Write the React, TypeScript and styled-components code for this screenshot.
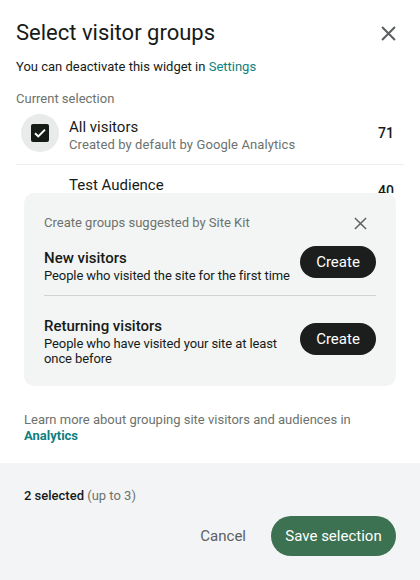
import styled, { createGlobalStyle } from 'styled-components';

const GlobalStyle = createGlobalStyle`
  html, body {
    margin: 0;
    padding: 0;
    background: #ffffff;
  }

  body {
    font-family: Roboto, "Noto Sans", "Liberation Sans", sans-serif;
    color: #202124;
    -webkit-font-smoothing: antialiased;
  }

  * {
    box-sizing: border-box;
  }
`;

const Dialog = styled.div`
  width: 420px;
  height: 580px;
  display: flex;
  flex-direction: column;
  background: #ffffff;
  overflow: hidden;
`;

const Header = styled.header`
  padding: 19px 16px 0 16px;
`;

const TitleRow = styled.div`
  display: flex;
  justify-content: space-between;
  align-items: center;
  padding-right: 7px;
`;

const Title = styled.h1`
  margin: 0;
  font-size: 22px;
  line-height: 28px;
  font-weight: 400;
  color: #161b18;
`;

const IconButton = styled.button<{ size: number }>`
  display: flex;
  align-items: center;
  justify-content: center;
  padding: 0;
  border: none;
  background: none;
  color: #5c5f62;
  width: ${({ size }) => size}px;
  height: ${({ size }) => size}px;
  cursor: pointer;
`;

const Subtitle = styled.p`
  margin: 12px 0 0 0;
  font-size: 13px;
  line-height: 16px;
  color: #161b18;

  a {
    color: #108080;
    text-decoration: none;
  }
`;

const SectionLabel = styled.p`
  margin: 16px 0 0 0;
  font-size: 13px;
  line-height: 16px;
  color: #6c726e;
`;

const List = styled.ul`
  list-style: none;
  margin: 0 16px;
  padding: 0;
  height: 86px;
  overflow: hidden;
`;

const Row = styled.li`
  display: flex;
  align-items: center;
  height: 58px;
  padding: 0 10px 6px 5px;
  border-bottom: 1px solid #ebeeec;
`;

const CheckHalo = styled.span<{ visible: boolean }>`
  flex: none;
  width: 38px;
  height: 38px;
  border-radius: 50%;
  display: flex;
  align-items: center;
  justify-content: center;
  margin-right: 10px;
  background: ${({ visible }) => (visible ? '#e8ebe9' : 'transparent')};
`;

const CheckBox = styled.span<{ checked: boolean }>`
  width: 18px;
  height: 18px;
  border-radius: 2px;
  display: flex;
  align-items: center;
  justify-content: center;
  background: ${({ checked }) => (checked ? '#161b18' : 'transparent')};
`;

const RowText = styled.div`
  flex: 1;
  display: flex;
  flex-direction: column;
  margin-top: 4px;
`;

const RowTitle = styled.span`
  font-size: 15px;
  line-height: 20px;
  color: #161b18;
`;

const RowSub = styled.span`
  font-size: 13px;
  line-height: 16px;
  color: #6c726e;
  letter-spacing: 0.1px;
`;

const Count = styled.span`
  font-size: 14px;
  font-weight: 500;
  color: #161b18;
`;

const Suggestions = styled.section`
  margin: 0 24px;
  padding: 22px 20px 20px 20px;
  background: #f3f5f4;
  border-radius: 10px;
`;

const SuggestionsHead = styled.div`
  display: flex;
  justify-content: space-between;
  align-items: center;
  padding-right: 8px;
`;

const SuggestionsLabel = styled.span`
  font-size: 13px;
  line-height: 16px;
  color: #6c726e;
`;

const Suggestion = styled.div<{ last?: boolean }>`
  display: flex;
  align-items: center;
  gap: 4px;
  padding: ${({ last }) => (last ? '20px 0 0 0' : '17px 0 12px 0')};
  border-bottom: ${({ last }) => (last ? 'none' : '1px solid #cfd3d1')};
`;

const SuggestionText = styled.div`
  flex: 1;
  display: flex;
  flex-direction: column;
`;

const SuggestionTitle = styled.span`
  font-size: 15px;
  line-height: 20px;
  font-weight: 500;
  color: #161b18;
`;

const SuggestionDesc = styled.span`
  font-size: 13px;
  line-height: 15px;
  color: #161b18;
  letter-spacing: -0.1px;
`;

const CreateButton = styled.button<{ lift: number }>`
  flex: none;
  width: 76px;
  height: 32px;
  margin-top: ${({ lift }) => -lift}px;
  border-radius: 16px;
  border: none;
  background: #1b1e1c;
  color: #ffffff;
  font-family: inherit;
  font-size: 15px;
  cursor: pointer;
`;

const LearnMore = styled.p`
  margin: 26px 24px 19px 24px;
  font-size: 13px;
  line-height: 16px;
  color: #6c726e;

  a {
    display: block;
    color: #0f7f7f;
    font-weight: 700;
    text-decoration: none;
  }
`;

const Footer = styled.footer`
  flex: 1;
  background: #f3f4f5;
  padding: 25px 24px 24px 24px;
  display: flex;
  flex-direction: column;
`;

const SelectedCount = styled.p`
  margin: 0;
  font-size: 13px;
  line-height: 16px;
  font-weight: 500;
  color: #161b18;

  span {
    font-weight: 400;
    color: #6c726e;
  }
`;

const Actions = styled.div`
  margin-top: 12px;
  display: flex;
  justify-content: flex-end;
  align-items: center;
  gap: 13px;
`;

const TextButton = styled.button`
  border: none;
  background: none;
  padding: 0 12px;
  height: 40px;
  font-family: inherit;
  font-size: 15px;
  color: #5c5f62;
  cursor: pointer;
`;

const PrimaryButton = styled.button`
  height: 40px;
  width: 125px;
  border-radius: 20px;
  border: none;
  background: #3c7251;
  color: #ffffff;
  font-family: inherit;
  font-size: 15px;
  cursor: pointer;
`;

const CloseIcon = ({ size, stroke }: { size: number; stroke: number }) => (
  <svg width={size} height={size} viewBox="0 0 14 14" fill="none">
    <path d="M1 1L13 13M13 1L1 13" stroke="currentColor" strokeWidth={stroke} />
  </svg>
);

const CheckMark = () => (
  <svg width="12" height="10" viewBox="0 0 12 10" fill="none">
    <path d="M1 5.2L4.3 8.4L11 1.6" stroke="#ffffff" strokeWidth="2" />
  </svg>
);

const audiences = [
  { title: 'All visitors', sub: 'Created by default by Google Analytics', count: '71', checked: true },
  { title: 'Test Audience', sub: 'Created by you', count: '40', checked: true },
];

const suggestions = [
  { title: 'New visitors', desc: 'People who visited the site for the first time', lift: 8 },
  { title: 'Returning visitors', desc: 'People who have visited your site at least once before', lift: 4 },
];

export default function App() {
  return (
    <>
      <GlobalStyle />
      <Dialog>
        <Header>
          <TitleRow>
            <Title>Select visitor groups</Title>
            <IconButton size={18}>
              <CloseIcon size={15} stroke={1.9} />
            </IconButton>
          </TitleRow>
          <Subtitle>
            You can deactivate this widget in <a href="#">Settings</a>
          </Subtitle>
          <SectionLabel>Current selection</SectionLabel>
        </Header>

        <List>
          {audiences.map((a, i) => (
            <Row key={a.title}>
              <CheckHalo visible={i === 0}>
                <CheckBox checked={i === 0}>{i === 0 && <CheckMark />}</CheckBox>
              </CheckHalo>
              <RowText>
                <RowTitle>{a.title}</RowTitle>
                <RowSub>{a.sub}</RowSub>
              </RowText>
              <Count>{a.count}</Count>
            </Row>
          ))}
        </List>

        <Suggestions>
          <SuggestionsHead>
            <SuggestionsLabel>Create groups suggested by Site Kit</SuggestionsLabel>
            <IconButton size={16}>
              <CloseIcon size={13} stroke={1.6} />
            </IconButton>
          </SuggestionsHead>
          {suggestions.map((s, i) => (
            <Suggestion key={s.title} last={i === suggestions.length - 1}>
              <SuggestionText>
                <SuggestionTitle>{s.title}</SuggestionTitle>
                <SuggestionDesc>{s.desc}</SuggestionDesc>
              </SuggestionText>
              <CreateButton lift={s.lift}>Create</CreateButton>
            </Suggestion>
          ))}
        </Suggestions>

        <LearnMore>
          Learn more about grouping site visitors and audiences in
          <a href="#">Analytics</a>
        </LearnMore>

        <Footer>
          <SelectedCount>
            2 selected <span>(up to 3)</span>
          </SelectedCount>
          <Actions>
            <TextButton>Cancel</TextButton>
            <PrimaryButton>Save selection</PrimaryButton>
          </Actions>
        </Footer>
      </Dialog>
    </>
  );
}
